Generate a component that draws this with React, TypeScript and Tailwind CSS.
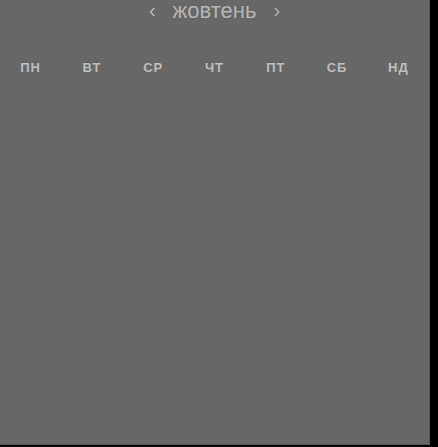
import React from "react";

export default function App() {
  const days = ["ПН", "ВТ", "СР", "ЧТ", "ПТ", "СБ", "НД"];
  return (
    <div className="w-[438px] h-[447px] bg-black" style={{ fontFamily: '"Liberation Sans", Arial, sans-serif' }}>
      <div className="w-[430px] h-[445px] bg-[#676767] border-r border-b border-[#555] flex flex-col">
        <div className="flex items-start justify-center gap-[17px] h-[24px] text-[#b4b4b4]">
          <span className="text-[20px] leading-none">‹</span>
          <span className="text-[22px] leading-none">жовтень</span>
          <span className="text-[20px] leading-none">›</span>
        </div>
        <div className="grid grid-cols-7 mt-[36px]">
          {days.map((d) => (
            <div key={d} className="text-center text-[13px] font-bold tracking-[1px] text-[#bdbdbd] leading-[16px]">
              {d}
            </div>
          ))}
        </div>
      </div>
    </div>
  );
}
